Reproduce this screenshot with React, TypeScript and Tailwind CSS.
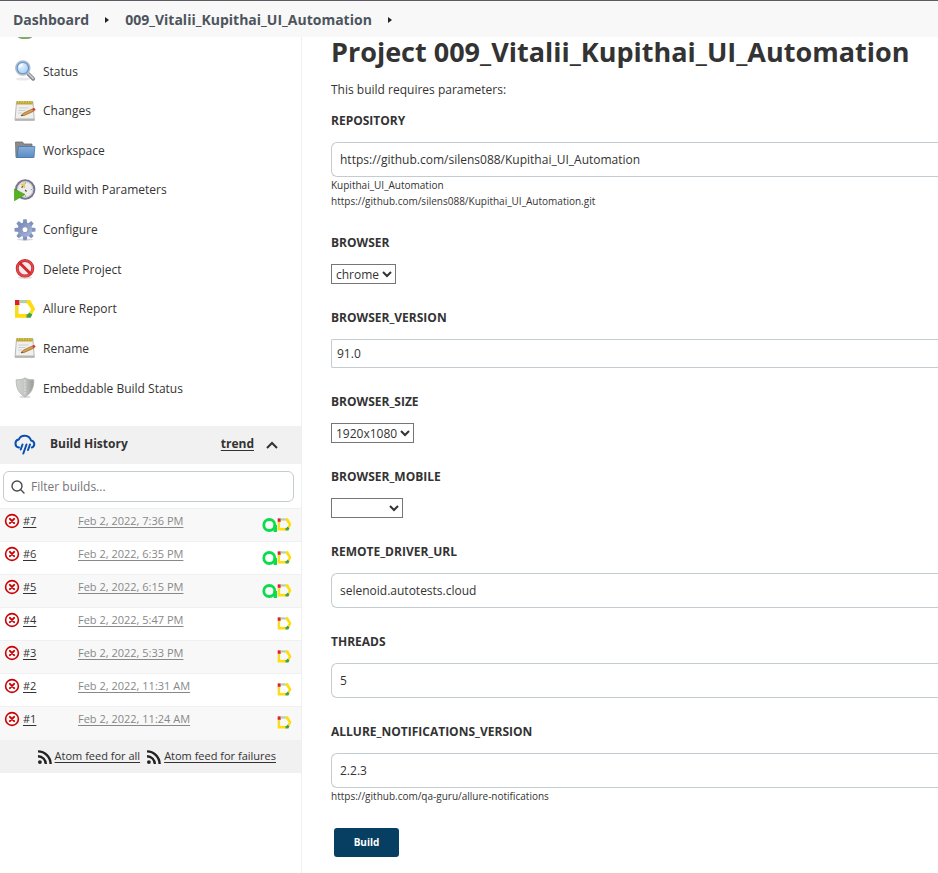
import React from "react";

function ArrowUpIcon() {
  return (
    <svg width="22" height="22" viewBox="0 0 22 22" aria-hidden="true">
      <path d="M11 2 20 11h-5v9H7v-9H2z" fill="#6fae45" />
      <ellipse cx="11" cy="20" rx="7" ry="2" fill="#8f958c" />
      <ellipse cx="11" cy="19" rx="5" ry="2.500" fill="#77b64c" />
    </svg>
  );
}

function SearchIcon() {
  return (
    <svg width="22" height="22" viewBox="0 0 22 22" aria-hidden="true">
      <defs>
        <radialGradient id="lens" cx="40%" cy="35%" r="70%">
          <stop offset="0" stopColor="#e6f2fd" />
          <stop offset="1" stopColor="#9cc6ee" />
        </radialGradient>
      </defs>
      <ellipse cx="9" cy="19" rx="7" ry="1.600" fill="#e9e9e9" />
      <path d="M14.200 13.800l5 5" stroke="#82868b" strokeWidth="3.800" strokeLinecap="round" />
      <path d="M14.500 13.800l4.600 4.600" stroke="#c9ccd0" strokeWidth="1.600" strokeLinecap="round" />
      <circle cx="8.800" cy="8" r="7" fill="url(#lens)" stroke="#b4bbc4" strokeWidth="1.500" />
      <circle cx="8.800" cy="8" r="5.700" fill="none" stroke="#5b90cf" strokeWidth="1.100" />
      <path d="M5.300 8a3.800 3.800 0 0 1 3.600-3.400" stroke="#fff" strokeWidth="1.300" fill="none" />
    </svg>
  );
}

function NotepadIcon() {
  return (
    <svg width="22" height="22" viewBox="0 0 22 22" aria-hidden="true">
      <path d="M2.500 2h16.400l1.400 18.300H1z" fill="#efefed" stroke="#b9b9b5" strokeWidth="1" />
      <path d="M1.200 18.400h19l.2 2.200H1z" fill="#b5b5b1" />
      <path d="M2.600 1h16.200v3.400H2.400z" fill="#bfa83a" />
      <path d="M4.500 1v2M7 1v2M9.500 1v2M12 1v2M14.500 1v2M17 1v2" stroke="#d6c465" strokeWidth="1" />
      <path d="M4.500 8h10M4.300 10.500h7M4.200 13h4" stroke="#cfcfcf" strokeWidth="1" />
      <path d="M7 15.800l2.300-2.600 9-4.200 1.400 2.200-9.400 4.200z" fill="#dca04a" stroke="#94622a" strokeWidth=".7" />
      <path d="M7 15.800l1.200-1.400.8 1.200z" fill="#333" />
      <path d="M18.200 8.800l2-1 1.500 2.200-2 1.100z" fill="#d8362f" />
    </svg>
  );
}

function FolderIcon() {
  return (
    <svg width="22" height="22" viewBox="0 0 22 22" aria-hidden="true">
      <defs>
        <linearGradient id="folder" x1="0" y1="0" x2="0" y2="1">
          <stop offset="0" stopColor="#87afdc" />
          <stop offset="1" stopColor="#5c8cc4" />
        </linearGradient>
      </defs>
      <path d="M1.500 3h7l1.500 2h8V10l-1 8.500H2z" fill="#8b8b8b" stroke="#6c6c6c" strokeWidth=".8" />
      <path d="M4.500 7.500h16.300l-.8 11H3z" fill="url(#folder)" stroke="#4676ae" strokeWidth=".8" />
    </svg>
  );
}

function ClockIcon() {
  return (
    <svg width="22" height="22" viewBox="0 0 22 22" aria-hidden="true">
      <circle cx="11.200" cy="10.500" r="9.200" fill="#ececea" stroke="#77768f" strokeWidth="2" />
      <circle cx="11.200" cy="10.500" r="7.600" fill="none" stroke="#c5c5cf" strokeWidth=".8" />
      <path d="M11 9.500V3.800L6.300 5.600z" fill="#ecc94d" />
      <path d="M7.500 8.500l1.500-1M11.200 11l1.300 1.500" stroke="#444" strokeWidth="1.200" />
      <path d="M11.500 3.500v1M17.800 10.500h-1M11.500 17.500v-1" stroke="#888" strokeWidth="1" />
      <path d="M.4 10 11 15.500 .4 21.700z" fill="#55b420" stroke="#3c9210" strokeWidth=".6" />
    </svg>
  );
}

function GearIcon() {
  const teeth = [0, 45, 90, 135, 180, 225, 270, 315];
  return (
    <svg width="22" height="22" viewBox="0 0 22 22" aria-hidden="true">
      <defs>
        <linearGradient id="gear" x1="0" y1="0" x2="1" y2="1">
          <stop offset="0" stopColor="#7084b4" />
          <stop offset="1" stopColor="#b0badb" />
        </linearGradient>
      </defs>
      <ellipse cx="11" cy="20.500" rx="8" ry="1.200" fill="#d9d9dd" />
      {teeth.map((angle) => (
        <path key={angle} d="M8.700 4.500 9.300.2h3.400l.6 4.300z" fill="#8292bd" transform={`rotate(${angle} 11 10.700)`} />
      ))}
      <circle cx="11" cy="10.700" r="7.200" fill="url(#gear)" />
      <circle cx="11" cy="10.700" r="3" fill="#fff" stroke="#7687b2" strokeWidth=".8" />
    </svg>
  );
}

function ForbiddenIcon() {
  return (
    <svg width="22" height="22" viewBox="0 0 22 22" aria-hidden="true">
      <ellipse cx="11" cy="19.500" rx="7" ry="1.500" fill="#dcdcdc" />
      <circle cx="11" cy="10.300" r="7.800" fill="#f6e9e9" stroke="#c4262b" strokeWidth="3" />
      <circle cx="11" cy="10.300" r="7.800" fill="none" stroke="#e5484b" strokeWidth="1.600" />
      <path d="M5.500 4.800l11 11" stroke="#d2292d" strokeWidth="3" />
    </svg>
  );
}

function AllureIcon({ size }: { size: number }) {
  return (
    <svg width={size} height={size} viewBox="0 0 22 22" aria-hidden="true">
      <path d="M1 6.500h3.600v10H1z" fill="#f3dc2c" />
      <path d="M1 16h12.500v3.800H1z" fill="#ffdc0a" />
      <path d="M1 2h4.500v5H1z" fill="#dc1f2c" />
      <path d="M5.500 2H13v3.200H5.500z" fill="#b5cfa9" />
      <path d="M13 2h3.200l5 9-3 5-3-1.600 2-3.400L13 5.200z" fill="#ffdc0a" />
      <path d="M15 14.400l3.400 1.800-1.700 3.600h-4.200V16.300h1.400z" fill="#3fa246" />
    </svg>
  );
}

function ShieldIcon() {
  return (
    <svg width="22" height="22" viewBox="0 0 22 22" aria-hidden="true">
      <defs>
        <linearGradient id="shield" x1="0" y1="0" x2="1" y2="0">
          <stop offset="0" stopColor="#d2d4d1" />
          <stop offset=".5" stopColor="#c3c5c2" />
          <stop offset="1" stopColor="#969995" />
        </linearGradient>
      </defs>
      <ellipse cx="11" cy="19.800" rx="6" ry="1.300" fill="#dedede" />
      <path d="M11 .8c2 1.500 5 2.200 8.800 2C20 10 18 16 11 20 4 16 2 10 2.200 2.800 6 3 9 2.300 11 .8z" fill="url(#shield)" stroke="#b0b2af" strokeWidth=".8" />
      <path d="M11 3v14.500" stroke="#e0e2df" strokeWidth="1" strokeDasharray="2 1" />
    </svg>
  );
}

function RainIcon() {
  return (
    <svg width="24" height="24" viewBox="0 0 24 24" fill="none" stroke="#0b4fb3" strokeWidth="2" strokeLinecap="round" strokeLinejoin="round" aria-hidden="true">
      <path d="M6 14.500a4 4 0 0 1-.3-7.900A6.600 6.600 0 0 1 18 7.500a3.600 3.600 0 0 1 .8 7" />
      <path d="M9.500 11.500l-1.800 5M13.500 11.500l-3.200 9M17 11.500l-2 5.500" />
    </svg>
  );
}

function FailedIcon() {
  return (
    <svg width="16" height="16" viewBox="0 0 16 16" fill="none" stroke="#cc0003" strokeLinecap="round" aria-hidden="true">
      <circle cx="8" cy="8" r="6.400" strokeWidth="1.600" />
      <path d="M5.900 5.900l4.200 4.200M10.100 5.900l-4.200 4.200" strokeWidth="2" />
    </svg>
  );
}

function AutotestsIcon() {
  return (
    <svg width="15" height="14" viewBox="0 0 15 14" fill="none" stroke="#0bdc4b" aria-hidden="true">
      <circle cx="7.300" cy="7" r="5.500" strokeWidth="2.800" />
      <path d="M13.300 7v7" strokeWidth="3.400" />
    </svg>
  );
}

function FeedIcon() {
  return (
    <svg width="14" height="14" viewBox="0 0 14 14" fill="none" stroke="#222" strokeWidth="2.400" aria-hidden="true">
      <circle cx="1.900" cy="12.100" r="1.900" fill="#222" stroke="none" />
      <path d="M0 6.200A7.800 7.800 0 0 1 7.800 14M0 1.400A12.600 12.600 0 0 1 12.600 14" />
    </svg>
  );
}

const tasks: { label: string; icon: React.ReactNode }[] = [
  { label: "Status", icon: <SearchIcon /> },
  { label: "Changes", icon: <NotepadIcon /> },
  { label: "Workspace", icon: <FolderIcon /> },
  { label: "Build with Parameters", icon: <ClockIcon /> },
  { label: "Configure", icon: <GearIcon /> },
  { label: "Delete Project", icon: <ForbiddenIcon /> },
  { label: "Allure Report", icon: <AllureIcon size={22} /> },
  { label: "Rename", icon: <NotepadIcon /> },
  { label: "Embeddable Build Status", icon: <ShieldIcon /> },
];

const builds = [
  { id: "#7", date: "Feb 2, 2022, 7:36 PM", autotests: true },
  { id: "#6", date: "Feb 2, 2022, 6:35 PM", autotests: true },
  { id: "#5", date: "Feb 2, 2022, 6:15 PM", autotests: true },
  { id: "#4", date: "Feb 2, 2022, 5:47 PM", autotests: false },
  { id: "#3", date: "Feb 2, 2022, 5:33 PM", autotests: false },
  { id: "#2", date: "Feb 2, 2022, 11:31 AM", autotests: false },
  { id: "#1", date: "Feb 2, 2022, 11:24 AM", autotests: false },
];

function Crumb() {
  return (
    <svg width="4" height="6" viewBox="0 0 4 6" aria-hidden="true">
      <path d="M0 0l4 3-4 3z" fill="#222" />
    </svg>
  );
}

function Field({ name, help, children }: { name: string; help?: string[]; children: React.ReactNode }) {
  return (
    <div className="flex flex-col items-start">
      <label htmlFor={name} className="mb-[11px] leading-5 font-bold">
        {name}
      </label>
      {children}
      {help?.map((line) => (
        <p key={line} className="text-[10px] leading-4">
          {line}
        </p>
      ))}
    </div>
  );
}

function TextField({ name, value }: { name: string; value: string }) {
  return (
    <input
      id={name}
      type="text"
      defaultValue={value}
      className="h-[35px] w-full rounded-l-md border border-r-0 border-[#c3ccd1] px-2 outline-none"
    />
  );
}

export default function App() {
  return (
    <div className="min-h-screen bg-white font-['Open_Sans','Noto_Sans',sans-serif] text-xs text-[#333]">
      <nav aria-label="Breadcrumb" className="flex h-[37px] items-center border-t border-[#5c5961] bg-[#f8f8f8] pt-px pl-[13px] text-sm font-bold text-[#4d545d]">
        <a href="#dashboard">Dashboard</a>
        <span className="mx-4"><Crumb /></span>
        <a href="#project">009_Vitalii_Kupithai_UI_Automation</a>
        <span className="mx-4"><Crumb /></span>
      </nav>

      <div className="flex min-h-[836px] items-stretch">
        <aside className="w-[302px] shrink-0 border-r border-[#efefef]">
          <a href="#up" aria-label="Up" className="ml-[14px] flex h-[2px] w-[22px] items-end overflow-hidden">
            <ArrowUpIcon />
          </a>
          <ul className="mt-5 flex h-[341px] flex-col justify-between">
            {tasks.map((task) => (
              <li key={task.label}>
                <a href="#task" className="ml-[14px] flex h-6 items-center gap-[7px]">
                  {task.icon}
                  <span className="pt-px">{task.label}</span>
                </a>
              </li>
            ))}
          </ul>

          <section className="mt-[26px]">
            <header className="flex h-[38px] items-center bg-[#f1f1f1] pr-[23px] pl-[13px] font-bold">
              <RainIcon />
              <h2 className="ml-[13px] grow pb-0.5">Build History</h2>
              <a href="#trend" className="pb-0.5 underline underline-offset-2">trend</a>
              <button type="button" aria-label="Collapse" className="ml-3">
                <svg width="12" height="8" viewBox="0 0 12 8" fill="none" stroke="#333" strokeWidth="2" aria-hidden="true">
                  <path d="M1 7l5-5 5 5" />
                </svg>
              </button>
            </header>
            <div className="mt-[7px] mr-[7px] ml-[3px] flex h-[31px] items-center gap-[6px] rounded-md border border-[#c3ccd1] pl-[7px]">
              <svg width="14" height="14" viewBox="0 0 14 14" fill="none" stroke="#4b4b4b" strokeWidth="1.400" strokeLinecap="round" aria-hidden="true">
                <circle cx="6" cy="6" r="5" />
                <path d="M9.800 9.800l3.200 3.200" />
              </svg>
              <input type="text" aria-label="Filter builds" placeholder="Filter builds..." className="min-w-0 grow pt-px outline-none placeholder:text-[#757575]" />
            </div>

            <table className="mt-[6px] w-full table-fixed border-collapse text-[11px] leading-4">
              <tbody>
                {builds.map((build) => (
                  <tr key={build.id} className="h-[33px] border-t border-[#f0f0f0] odd:bg-[#f8f8f8]">
                    <td className="w-[78px] pt-1 pl-1 align-top">
                      <span className="flex items-center gap-[3px]">
                        <FailedIcon />
                        <a href="#build" className="underline underline-offset-2">{build.id}</a>
                      </span>
                    </td>
                    <td className="pt-1 align-top">
                      <a href="#build" className="text-[#888] underline underline-offset-2">{build.date}</a>
                    </td>
                    <td className="w-[60px] pt-2 pr-[9px] align-top">
                      <span className="flex items-center justify-end">
                        {build.autotests && <AutotestsIcon />}
                        <AllureIcon size={15} />
                      </span>
                    </td>
                  </tr>
                ))}
              </tbody>
            </table>

            <footer className="flex h-[33px] items-center justify-end gap-[7px] bg-[#f1f1f1] pt-px pr-[25px] text-[11px]">
              <a href="#all" className="flex items-center gap-[3px] underline underline-offset-2">
                <FeedIcon />
                Atom feed for all
              </a>
              <a href="#failures" className="flex items-center gap-[3px] underline underline-offset-2">
                <FeedIcon />
                Atom feed for failures
              </a>
            </footer>
          </section>
        </aside>

        <main className="min-w-0 grow pl-[29px]">
          <h1 className="text-[27px] leading-[30px] font-bold whitespace-nowrap">
            Project 009_Vitalii_Kupithai_UI_Automation
          </h1>
          <p className="mt-[13px] leading-5">This build requires parameters:</p>
          <form className="mt-[11px] flex flex-col gap-6" onSubmit={(event) => event.preventDefault()}>
            <Field name="REPOSITORY" help={["Kupithai_UI_Automation", "https://github.com/silens088/Kupithai_UI_Automation.git"]}>
              <TextField name="REPOSITORY" value="https://github.com/silens088/Kupithai_UI_Automation" />
            </Field>
            <Field name="BROWSER">
              <select id="BROWSER" className="h-5 w-[65px] border border-[#767676] bg-white">
                <option>chrome</option>
              </select>
            </Field>
            <Field name="BROWSER_VERSION">
              <input id="BROWSER_VERSION" type="text" defaultValue="91.0" className="h-[29px] w-full rounded-l-xs border border-r-0 border-[#c3ccd1] px-[5px] outline-none" />
            </Field>
            <Field name="BROWSER_SIZE">
              <select id="BROWSER_SIZE" className="h-5 w-[83px] border border-[#767676] bg-white">
                <option>1920x1080</option>
              </select>
            </Field>
            <Field name="BROWSER_MOBILE">
              <select id="BROWSER_MOBILE" className="h-5 w-[72px] border border-[#767676] bg-white">
                <option></option>
              </select>
            </Field>
            <Field name="REMOTE_DRIVER_URL">
              <TextField name="REMOTE_DRIVER_URL" value="selenoid.autotests.cloud" />
            </Field>
            <Field name="THREADS">
              <TextField name="THREADS" value="5" />
            </Field>
            <Field name="ALLURE_NOTIFICATIONS_VERSION" help={["https://github.com/qa-guru/allure-notifications"]}>
              <TextField name="ALLURE_NOTIFICATIONS_VERSION" value="2.2.3" />
            </Field>
            <button type="submit" className="ml-[3px] h-[29px] w-[65px] rounded-[3px] bg-[#063f61] text-[10px] font-bold text-white">
              Build
            </button>
          </form>
        </main>
      </div>
    </div>
  );
}
